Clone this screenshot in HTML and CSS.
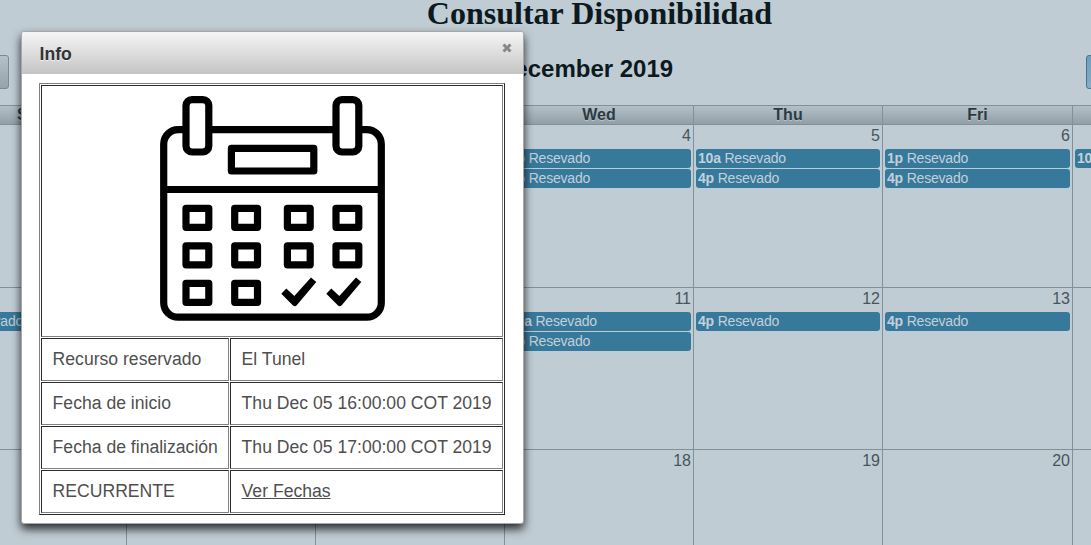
FILE: index.html
```html
<!DOCTYPE html>
<html lang="es">
<head>
<meta charset="utf-8">
<title>Consultar Disponibilidad</title>
<link rel="stylesheet" href="styles.css">
</head>
<body>
<div class="page">
  <h1 class="page-title">Consultar Disponibilidad</h1>
  <div class="toolbar">
    <span class="btn btn-nav"></span>
    <h2 class="month">December 2019</h2>
    <span class="btn btn-view"></span>
  </div>
  <div class="calendar">
    <div class="head">Sun</div><div class="head">Mon</div><div class="head">Tue</div><div class="head">Wed</div><div class="head">Thu</div><div class="head">Fri</div><div class="head">Sat</div>

    <div class="day"><span class="num">1</span></div>
    <div class="day"><span class="num">2</span></div>
    <div class="day"><span class="num">3</span></div>
    <div class="day"><span class="num">4</span><a class="event"><b>1p</b> Resevado</a><a class="event"><b>4p</b> Resevado</a></div>
    <div class="day"><span class="num">5</span><a class="event"><b>10a</b> Resevado</a><a class="event"><b>4p</b> Resevado</a></div>
    <div class="day"><span class="num">6</span><a class="event"><b>1p</b> Resevado</a><a class="event"><b>4p</b> Resevado</a></div>
    <div class="day"><span class="num">7</span><a class="event"><b>10a</b> Resevado</a></div>

    <div class="day"><span class="num">8</span><a class="event"><b>4p</b> Resevado</a></div>
    <div class="day"><span class="num">9</span></div>
    <div class="day"><span class="num">10</span></div>
    <div class="day"><span class="num">11</span><a class="event"><b>10a</b> Resevado</a><a class="event"><b>4p</b> Resevado</a></div>
    <div class="day"><span class="num">12</span><a class="event"><b>4p</b> Resevado</a></div>
    <div class="day"><span class="num">13</span><a class="event"><b>4p</b> Resevado</a></div>
    <div class="day"><span class="num">14</span></div>

    <div class="day"><span class="num">15</span></div>
    <div class="day"><span class="num">16</span></div>
    <div class="day"><span class="num">17</span></div>
    <div class="day"><span class="num">18</span></div>
    <div class="day"><span class="num">19</span></div>
    <div class="day"><span class="num">20</span></div>
    <div class="day"><span class="num">21</span></div>
  </div>
</div>

<div class="dialog">
  <div class="dialog-head">
    <span>Info</span>
    <svg class="close" width="10" height="10" viewBox="0 0 10 10"><path d="M1.5 1.5L8.5 8.5M8.5 1.5L1.5 8.5"/></svg>
  </div>
  <div class="dialog-body">
    <table class="info">
      <colgroup><col class="col-label"><col></colgroup>
      <tr>
        <td colspan="2" class="picture">
          <svg width="225" height="225" viewBox="0 0 225 225">
            <g fill="#fff" stroke="#000" stroke-width="7.2" stroke-linejoin="round">
              <rect x="3.7" y="33.6" width="217.6" height="187.6" rx="14.5"/>
              <path d="M4 93.5H221"/>
              <rect x="26" y="3.6" width="22.8" height="52.4" rx="6"/>
              <rect x="176" y="3.6" width="22.8" height="52.4" rx="6"/>
              <rect x="71.4" y="52.4" width="82.4" height="22.6"/>
              <rect x="26" y="112.3" width="22.8" height="19"/>
              <rect x="74.7" y="112.3" width="22.8" height="19"/>
              <rect x="127.4" y="112.3" width="22.8" height="19"/>
              <rect x="176" y="112.3" width="22.8" height="19"/>
              <rect x="26" y="149.8" width="22.8" height="19"/>
              <rect x="74.7" y="149.8" width="22.8" height="19"/>
              <rect x="127.4" y="149.8" width="22.8" height="19"/>
              <rect x="176" y="149.8" width="22.8" height="19"/>
              <rect x="26" y="187.3" width="22.8" height="19"/>
              <rect x="74.7" y="187.3" width="22.8" height="19"/>
            </g>
            <path d="M121.3 197.7L126.3 192.4L134.3 200L151 181.4L156.3 186L136.5 209.6Q134.8 210.8 133 209.4Z"/>
            <path d="M166.3 197.7L171.3 192.4L179.3 200L196 181.4L201.3 186L181.5 209.6Q179.8 210.8 178 209.4Z"/>
          </svg>
        </td>
      </tr>
      <tr><td>Recurso reservado</td><td>El Tunel</td></tr>
      <tr><td>Fecha de inicio</td><td>Thu Dec 05 16:00:00 COT 2019</td></tr>
      <tr><td>Fecha de finalización</td><td>Thu Dec 05 17:00:00 COT 2019</td></tr>
      <tr><td>RECURRENTE</td><td><a class="link">Ver Fechas</a></td></tr>
    </table>
  </div>
</div>
</body>
</html>
```
FILE: styles.css
```css
* { box-sizing: border-box; }

body {
  margin: 0;
  height: 545px;
  overflow: hidden;
  background: #c0ccd4;
  font-family: "Liberation Sans", Arial, sans-serif;
  color: #0c1a20;
}

.page {
  width: 1325px;
  height: 545px;
  margin-left: -63px;
  overflow: hidden;
}

.page-title {
  margin: 0;
  height: 55px;
  font: bold 32px/26px "Liberation Serif", "Times New Roman", serif;
  text-align: center;
}

.toolbar {
  display: flex;
  height: 50px;
  align-items: flex-start;
}

.btn {
  height: 34px;
  border: 1px solid #7d8a92;
  border-radius: 3px;
}

.btn-nav {
  width: 72px;
  background: linear-gradient(#b4c1c8, #96a3ab);
}

.btn-view {
  width: 176px;
  border-color: #3f7492;
  background: linear-gradient(#6f9fba, #86adc4);
}

.month {
  flex: 1;
  margin: 0;
  padding-left: 488px;
  font-size: 24px;
  line-height: 28px;
}

.calendar {
  display: grid;
  grid-template-columns: repeat(5, 189px) 190px 190px;
  grid-template-rows: 19px 163px 162px 162px;
  border-left: 1px solid #829098;
}

.head {
  border: solid #829098;
  border-width: 1px 1px 0 0;
  background: linear-gradient(#b3c0c7, #929fa6);
  color: #2b3a42;
  font-size: 16px;
  font-weight: bold;
  line-height: 18px;
  text-align: center;
  text-shadow: 0 1px 0 #b8c4cb;
}

.day {
  display: flex;
  flex-direction: column;
  gap: 1px;
  border: solid #829098;
  border-width: 1px 1px 0 0;
  padding: 0 2px;
}

.num {
  height: 23px;
  font-size: 16px;
  line-height: 22px;
  text-align: right;
  color: #47545c;
}

.event {
  height: 19px;
  padding-left: 2px;
  border-radius: 3px;
  background: #37799b;
  color: #c3d0d9;
  font-size: 14px;
  letter-spacing: -.2px;
  line-height: 18px;
  white-space: nowrap;
}

.dialog {
  position: absolute;
  left: 21px;
  top: 31px;
  width: 503px;
  height: 493px;
  border: 1px solid #a8a8a8;
  border-radius: 3px;
  background: #fff;
  box-shadow: 0 5px 10px rgba(0, 0, 0, .8);
}

.dialog-head {
  display: flex;
  justify-content: space-between;
  height: 42px;
  padding: 0 11px 0 17.6px;
  border-radius: 2px 2px 0 0;
  background: linear-gradient(#f6f6f6, #c4c4c4);
  color: #333;
  font-size: 17.6px;
  font-weight: bold;
  line-height: 45px;
  text-shadow: 0 1px 0 rgba(255, 255, 255, .7);
}

.close {
  margin-top: 11px;
  fill: none;
  stroke: #888;
  stroke-width: 3;
}

.dialog-body { padding: 9px 17px; }

.info {
  width: 466px;
  table-layout: fixed;
  border: 1px solid;
  border-color: #808080 #2b2b2b #2b2b2b #808080;
  border-spacing: 1px;
  color: #4f4f4f;
  font-size: 17.6px;
  line-height: 21px;
}

.info td {
  height: 43px;
  padding: 0 10px 0 10.6px;
  border: 1px solid;
  border-color: #2b2b2b #808080 #808080 #2b2b2b;
  white-space: nowrap;
}

.col-label { width: 188px; }

.info .picture {
  height: 252px;
  padding: 10px 0 0;
  vertical-align: top;
  text-align: center;
}

.picture svg { display: block; margin: 0 auto; }

.link { text-decoration: underline; }
```
